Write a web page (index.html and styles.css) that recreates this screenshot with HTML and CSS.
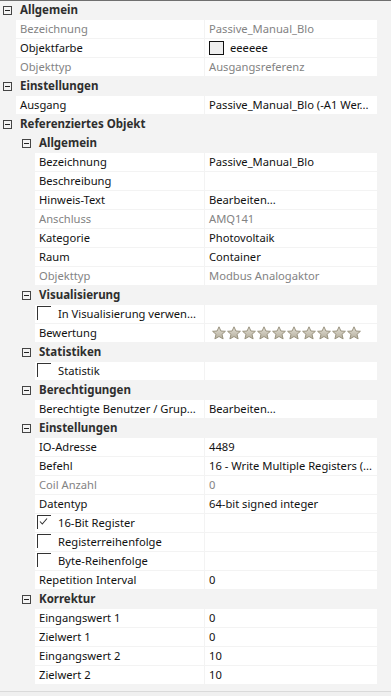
FILE: index.html
```html
<!doctype html>
<html lang="de">
   <head>
      <meta charset="UTF-8" />
      <title>Eigenschaften</title>
      <link rel="stylesheet" href="styles.css">
   </head>
   <body>
      <div class="grid">
         <div class="row head"><span class="tog"></span><span class="name">Allgemein</span></div>
         <div class="row"><div class="label ro">Bezeichnung</div><div class="value ro">Passive_Manual_Blo</div></div>
         <div class="row"><div class="label">Objektfarbe</div><div class="value"><span class="swatch"></span>eeeeee</div></div>
         <div class="row"><div class="label ro">Objekttyp</div><div class="value ro">Ausgangsreferenz</div></div>

         <div class="row head"><span class="tog"></span><span class="name">Einstellungen</span></div>
         <div class="row"><div class="label">Ausgang</div><div class="value">Passive_Manual_Blo (-A1 Wer...</div></div>

         <div class="row head"><span class="tog"></span><span class="name">Referenziertes Objekt</span></div>
         <div class="row head sub"><span class="tog"></span><span class="name">Allgemein</span></div>
         <div class="row sub"><div class="label">Bezeichnung</div><div class="value">Passive_Manual_Blo</div></div>
         <div class="row sub"><div class="label">Beschreibung</div><div class="value"></div></div>
         <div class="row sub"><div class="label">Hinweis-Text</div><div class="value">Bearbeiten...</div></div>
         <div class="row sub"><div class="label ro">Anschluss</div><div class="value ro">AMQ141</div></div>
         <div class="row sub"><div class="label">Kategorie</div><div class="value">Photovoltaik</div></div>
         <div class="row sub"><div class="label">Raum</div><div class="value">Container</div></div>
         <div class="row sub"><div class="label ro">Objekttyp</div><div class="value ro">Modbus Analogaktor</div></div>

         <div class="row head sub"><span class="tog"></span><span class="name">Visualisierung</span></div>
         <div class="row sub"><div class="label"><span class="check"></span>In Visualisierung verwen...</div><div class="value"></div></div>
         <div class="row sub">
            <div class="label">Bewertung</div>
            <div class="value stars">
               <svg viewBox="0 0 150 14" width="150" height="14">
                  <defs>
                     <linearGradient id="sg" x1="0" y1="0" x2="0" y2="1">
                        <stop offset="0" stop-color="#e4e0d6" />
                        <stop offset="1" stop-color="#b4ae9c" />
                     </linearGradient>
                     <path id="star" d="M7 0.8 L8.9 5 L13.4 5.3 L10 8.3 L11.1 12.9 L7 10.5 L2.9 12.9 L4 8.3 L0.6 5.3 L5.1 5 Z" fill="url(#sg)" stroke="#9a937f" stroke-width="1" stroke-linejoin="round" />
                  </defs>
                  <use href="#star" x="0" />
                  <use href="#star" x="15" />
                  <use href="#star" x="30" />
                  <use href="#star" x="45" />
                  <use href="#star" x="60" />
                  <use href="#star" x="75" />
                  <use href="#star" x="90" />
                  <use href="#star" x="105" />
                  <use href="#star" x="120" />
                  <use href="#star" x="135" />
               </svg>
            </div>
         </div>

         <div class="row head sub"><span class="tog"></span><span class="name">Statistiken</span></div>
         <div class="row sub"><div class="label"><span class="check"></span>Statistik</div><div class="value"></div></div>

         <div class="row head sub"><span class="tog"></span><span class="name">Berechtigungen</span></div>
         <div class="row sub"><div class="label">Berechtigte Benutzer / Grup...</div><div class="value">Bearbeiten...</div></div>

         <div class="row head sub"><span class="tog"></span><span class="name">Einstellungen</span></div>
         <div class="row sub"><div class="label">IO-Adresse</div><div class="value">4489</div></div>
         <div class="row sub"><div class="label">Befehl</div><div class="value">16 - Write Multiple Registers (...</div></div>
         <div class="row sub"><div class="label ro">Coil Anzahl</div><div class="value ro">0</div></div>
         <div class="row sub"><div class="label">Datentyp</div><div class="value">64-bit signed integer</div></div>
         <div class="row sub">
            <div class="label">
               <span class="check"><svg viewBox="0 0 13 13" width="13" height="13"><path d="M3 6.5 L5.3 9 L10 3.5" fill="none" stroke="#333" stroke-width="1.1" /></svg></span>16-Bit Register
            </div>
            <div class="value"></div>
         </div>
         <div class="row sub"><div class="label"><span class="check"></span>Registerreihenfolge</div><div class="value"></div></div>
         <div class="row sub"><div class="label"><span class="check"></span>Byte-Reihenfolge</div><div class="value"></div></div>
         <div class="row sub"><div class="label">Repetition Interval</div><div class="value">0</div></div>

         <div class="row head sub"><span class="tog"></span><span class="name">Korrektur</span></div>
         <div class="row sub"><div class="label">Eingangswert 1</div><div class="value">0</div></div>
         <div class="row sub"><div class="label">Zielwert 1</div><div class="value">0</div></div>
         <div class="row sub"><div class="label">Eingangswert 2</div><div class="value">10</div></div>
         <div class="row sub"><div class="label">Zielwert 2</div><div class="value">10</div></div>
      </div>
      <div class="footer"></div>
   </body>
</html>
```

FILE: styles.css
```css
* {
   margin: 0;
   padding: 0;
   box-sizing: border-box;
}
body {
   width: 391px;
   height: 696px;
   overflow: hidden;
   background: #f3f3f3;
   border-top: 1px solid #6f6f6f;
   font-family: "Noto Sans", sans-serif;
   font-size: 11.2px;
   color: #111;
}
.grid {
   display: flex;
   flex-direction: column;
   gap: 1px;
   width: 377px;
}
.row {
   display: flex;
   height: 18px;
   line-height: 18px;
   padding-left: 16px;
}
.row.sub {
   padding-left: 35px;
}
.label {
   width: 188px;
   background: #fff;
   padding-left: 4px;
   display: flex;
   align-items: center;
   white-space: nowrap;
   overflow: hidden;
}
.row.sub .label {
   width: 169px;
}
.value {
   flex: 1;
   margin-left: 1px;
   background: #fff;
   padding-left: 4px;
   display: flex;
   align-items: center;
   white-space: nowrap;
   overflow: hidden;
}
.ro {
   color: #838383;
}
.head {
   padding-left: 3px;
   align-items: center;
}
.head.sub {
   padding-left: 22px;
}
.tog {
   position: relative;
   width: 9px;
   height: 9px;
   border: 1px solid #444;
   margin-right: 8px;
}
.tog::after {
   content: "";
   position: absolute;
   left: 1px;
   top: 3px;
   width: 5px;
   height: 1px;
   background: #222;
}
.name {
   font-weight: 700;
   color: #2e2e2e;
   font-size: 11.5px;
}
.swatch {
   width: 15px;
   height: 14px;
   border: 1px solid #111;
   background: #eeeeee;
   margin-right: 6px;
}
.check {
   width: 14px;
   height: 14px;
   align-self: flex-start;
   margin: 1px 7px 0 -2px;
   border-top: 1px solid #333;
   border-left: 1px solid #333;
   flex-shrink: 0;
}
.check svg {
   display: block;
   margin: -1px 0 0 -1px;
}
.stars {
   padding-left: 7px;
}
.stars svg {
   display: block;
}
.footer {
   margin-top: 7px;
   border-top: 1px solid #dadada;
   height: 20px;
   background: #f0f0f0;
}
```
